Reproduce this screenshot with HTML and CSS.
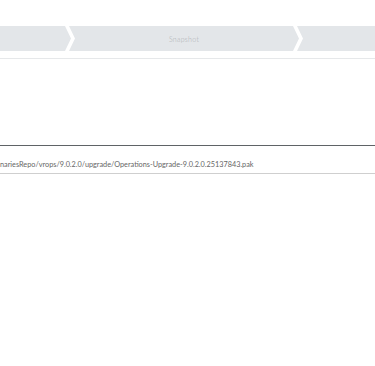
FILE: index.html
```html
<!DOCTYPE html>
<html>
<head>
<meta charset="utf-8">
<link rel="stylesheet" href="styles.css">
</head>
<body>
<div class="header">
  <div class="steps">
    <div class="step step-first"></div>
    <div class="step step-mid"><span class="label">Snapshot</span></div>
    <div class="step step-last"></div>
  </div>
</div>
<div class="content">
  <div class="table">
    <div class="row"><span class="path">nariesRepo/vrops/9.0.2.0/upgrade/Operations-Upgrade-9.0.2.0.25137843.pak</span></div>
  </div>
</div>
</body>
</html>
```
FILE: styles.css
```css
html, body {
  margin: 0;
  padding: 0;
  background: #ffffff;
  font-family: Lato, "Open Sans", sans-serif;
  overflow: hidden;
}
.header {
  padding-top: 26px;
  padding-bottom: 7px;
  border-bottom: 1px solid #e6e8ea;
}
.steps {
  display: flex;
  height: 25px;
}
.step {
  background: #e3e6e9;
  height: 25px;
  display: flex;
  align-items: center;
  justify-content: center;
}
.step-first {
  width: 71px;
  clip-path: polygon(0 0, 65px 0, 71px 50%, 65px 100%, 0 100%);
}
.step-mid {
  width: 230px;
  margin-left: -2px;
  clip-path: polygon(0 0, 224px 0, 230px 50%, 224px 100%, 0 100%, 6px 50%);
}
.step-last {
  flex: 1;
  margin-left: -2px;
  clip-path: polygon(0 0, 100% 0, 100% 100%, 0 100%, 6px 50%);
}
.label {
  font-size: 7px;
  font-weight: 300;
  color: #acafb2;
  letter-spacing: 0.3px;
}
.content {
  padding-top: 86px;
}
.table {
  border-top: 1px solid #5f6366;
}
.row {
  height: 28px;
  border-bottom: 1px solid #cfcfcf;
  display: flex;
  align-items: flex-end;
  padding-bottom: 4px;
  box-sizing: border-box;
}
.path {
  font-size: 7.3px;
  color: #666666;
  white-space: nowrap;
}
```
